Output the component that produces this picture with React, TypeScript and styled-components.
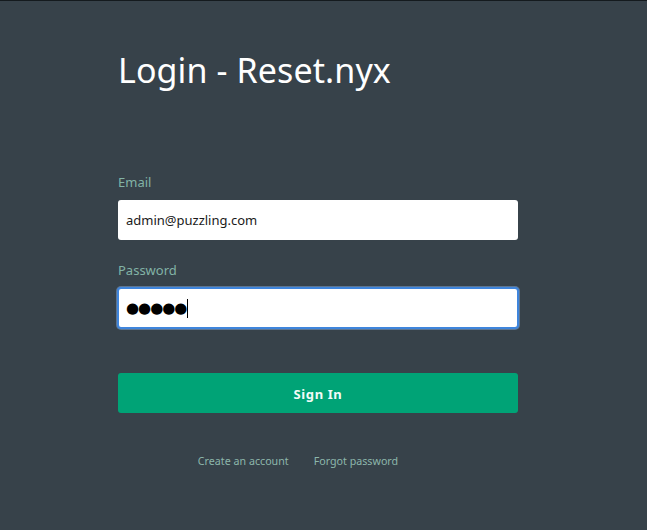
import React from "react";
import styled, { createGlobalStyle } from "styled-components";

const Global = createGlobalStyle`
  html, body { margin: 0; padding: 0; }
  body {
    background: #37424a;
    border-top: 1px solid #141a1e;
    font-family: "Noto Sans", "Open Sans", sans-serif;
    min-height: 529px;
  }
`;

const Page = styled.main`
  padding: 46px 0 0 118px;
`;

const Form = styled.form`
  width: 400px;
  display: flex;
  flex-direction: column;
`;

const Title = styled.h1`
  margin: 0 0 80px 0;
  font-weight: 400;
  font-size: 34px;
  line-height: 46px;
  color: #ffffff;
  letter-spacing: 0.1px;
`;

const Label = styled.label`
  font-size: 13px;
  line-height: 18px;
  color: #82b3a6;
  margin-bottom: 9px;
`;

const Input = styled.input`
  box-sizing: border-box;
  height: 40px;
  width: 100%;
  border: none;
  border-radius: 3px;
  background: #fff;
  padding: 0 8px;
  font-family: "Noto Sans", sans-serif;
  font-size: 13px;
  color: #1a1a1a;
  outline: none;
  margin-bottom: 21px;
`;

const PasswordBox = styled.div`
  box-sizing: border-box;
  height: 42px;
  width: 402px;
  margin: -1px 0 44px -1px;
  border: 2px solid #3f85dc;
  border-radius: 4px;
  box-shadow: 0 0 0 1px rgba(140, 180, 230, 0.45);
  background: #fff;
  padding: 0 7px;
  display: flex;
  align-items: center;
`;

const Dots = styled.span`
  font-family: "DejaVu Sans", sans-serif;
  font-size: 15px;
  color: #000;
  letter-spacing: -1px;
`;

const Caret = styled.span`
  display: inline-block;
  width: 1px;
  height: 19px;
  background: #000;
  margin-left: 1px;
`;

const Button = styled.button`
  height: 40px;
  border: none;
  border-radius: 3px;
  background: #00a376;
  color: #f3fbf8;
  font-family: "Noto Sans", sans-serif;
  font-weight: 700;
  font-size: 13px;
  letter-spacing: 0.6px;
  padding: 2px 0 0 0;
  cursor: pointer;
`;

const Links = styled.nav`
  display: flex;
  justify-content: center;
  gap: 25px;
  margin-top: 41px;
  padding-right: 40px;
`;

const LinkA = styled.a`
  font-size: 10.7px;
  line-height: 15px;
  color: #8cb6ab;
  text-decoration: none;
`;

export default function App() {
  return (
    <>
      <Global />
      <Page>
        <Form onSubmit={(e) => e.preventDefault()}>
          <Title>Login - Reset.nyx</Title>
          <Label htmlFor="email">Email</Label>
          <Input id="email" type="email" defaultValue="admin@puzzling.com" />
          <Label>Password</Label>
          <PasswordBox role="textbox" aria-label="Password">
            <Dots>●●●●●</Dots>
            <Caret />
          </PasswordBox>
          <Button type="submit">Sign In</Button>
          <Links>
            <LinkA href="#">Create an account</LinkA>
            <LinkA href="#">Forgot password</LinkA>
          </Links>
        </Form>
      </Page>
    </>
  );
}
